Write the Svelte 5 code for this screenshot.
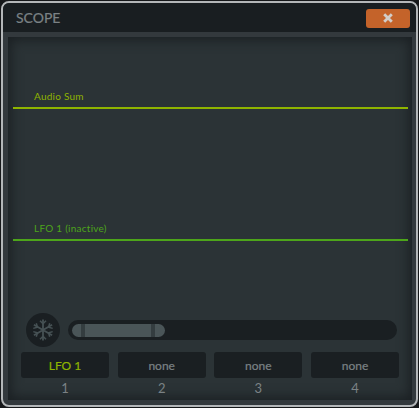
<script>
  const slots = [
    { name: 'LFO 1', id: 1, active: true },
    { name: 'none', id: 2 },
    { name: 'none', id: 3 },
    { name: 'none', id: 4 }
  ];
</script>

<div class="window">
  <header class="titlebar">
    <h1>SCOPE</h1>
    <button class="close" aria-label="Close">
      <svg width="10" height="10" viewBox="0 0 10 10"><path d="M1.2 1.2 8.8 8.8M8.8 1.2 1.2 8.8" stroke="#d2cdc9" stroke-width="2.8" /></svg>
    </button>
  </header>
  <main class="panel">
    <section class="scope">
      <div class="trace first"><span>Audio Sum</span></div>
      <div class="trace second"><span>LFO 1 (inactive)</span></div>
    </section>
    <div class="controls">
      <button class="freeze" aria-label="Freeze">
        <svg width="24" height="24" viewBox="0 0 24 24" fill="none" stroke="#465154" stroke-width="1.8">
          <path d="M12 1.5v21M2.9 6.7l18.2 10.6M2.9 17.3 21.1 6.7" />
          <path d="M9 2.8l3 3 3-3M9 21.2l3-3 3 3M2.3 10.4l4.1-1.1-1.1-4.1M21.7 13.6l-4.1 1.1 1.1 4.1M2.3 13.6l4.1 1.1-1.1 4.1M21.7 10.4l-4.1-1.1 1.1-4.1" stroke-width="1.5" />
        </svg>
      </button>
      <div class="track">
        <div class="thumb"><i></i><i></i></div>
      </div>
    </div>
    <div class="slots">
      {#each slots as s}
        <div class="slot">
          <div class="select" class:active={s.active}>{s.name}</div>
          <div class="num">{s.id}</div>
        </div>
      {/each}
    </div>
  </main>
</div>

<style>
  :global(body) { margin: 0; background: #16181a; }
  .window {
    box-sizing: border-box;
    width: 417px;
    height: 406px;
    margin: 1px;
    padding: 0 4px 5px 5px;
    background: #33393d;
    border: 2px solid #b4b7b9;
    border-radius: 8px;
    display: flex;
    flex-direction: column;
    font-family: "Lato", "Open Sans", sans-serif;
  }
  .titlebar {
    flex: none;
    height: 29px;
    margin: 0 -4px 5px -5px;
    padding: 0 6px 0 13px;
    background: #191e21;
    border-radius: 6px 6px 0 0;
    display: flex;
    align-items: center;
    justify-content: space-between;
  }
  h1 { margin: 0; font-size: 14px; font-weight: 400; color: #7b8285; -webkit-text-stroke: 0.2px #7b8285; }
  .close {
    width: 44px;
    height: 19px;
    margin-top: 1px;
    padding: 0;
    border: 0;
    border-radius: 3px;
    background: #c4632a;
    display: flex;
    align-items: center;
    justify-content: center;
  }
  .panel {
    flex: 1;
    min-height: 0;
    background: #2b3336;
    box-shadow: inset 0 0 12px 3px #1b2023;
    display: flex;
    flex-direction: column;
    padding: 0 4px 0 5px;
  }
  .scope { flex: none; height: 276px; position: relative; }
  .trace {
    position: absolute; left: 0; right: 0; height: 22px; box-sizing: border-box;
    padding: 2px 0 0 21px;
    border-bottom: 2px solid #8fb400;
    font-size: 10px;
    color: #8fb400;
  }
  .trace span { line-height: 14px; display: block; letter-spacing: 0.25px; }
  .trace.first { top: 50px; }
  .trace.second { top: 182px; color: #4da51a; border-color: #4da51a; }
  .controls { flex: none; display: flex; align-items: center; gap: 8px; margin-left: 13px; }
  .freeze {
    width: 34px; height: 34px; padding: 0; border: 0; border-radius: 50%;
    background: #1a1f22; display: flex; align-items: center; justify-content: center;
  }
  .track {
    width: 329px; height: 20px; box-sizing: border-box; padding: 4px; border-radius: 10px; background: #1a1f22;
  }
  .thumb {
    width: 93px; height: 13px; border-radius: 7px; background: #4a5558;
    display: flex; justify-content: space-between; padding: 0 10px 0 9px; box-sizing: border-box;
  }
  .thumb i { width: 4px; background: #343d40; display: block; }
  .slots { flex: none; display: grid; grid-template-columns: repeat(4, 88px); gap: 8.67px; margin: 5px 0 0 8px; }
  .select {
    height: 26px; border-radius: 3px; background: #1a1f22; color: #7b8285;
    font-size: 12px; display: flex; align-items: center; justify-content: center;
    -webkit-text-stroke: 0.2px currentColor;
  }
  .select.active { color: #8fb400; }
  .num { text-align: center; color: #7b8285; font-size: 13px; line-height: 15px; margin-top: 3px; }
</style>
